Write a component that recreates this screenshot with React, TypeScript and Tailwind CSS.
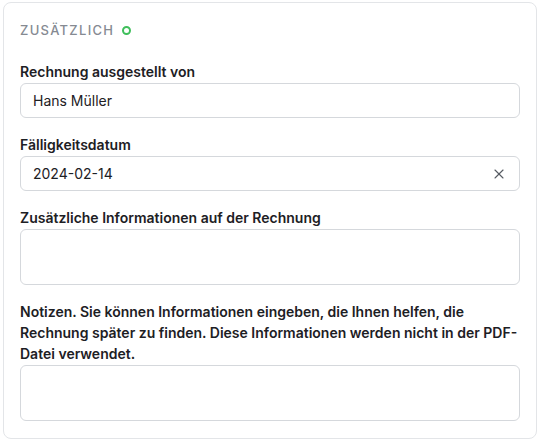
import { X } from "lucide-react";

function Field({ label, children }: { label: string; children: React.ReactNode }) {
  return (
    <div className="flex flex-col gap-[1px]">
      <label className="text-[14px] leading-[21px] font-semibold text-[#1d2024]">{label}</label>
      {children}
    </div>
  );
}

export default function App() {
  return (
    <div
      className="bg-white px-[3px] py-[2px]"
      style={{ fontFamily: "Inter, 'Noto Sans', sans-serif" }}>
      <div className="rounded-lg border border-[#e3e5e8] bg-white px-4 pt-[18px] pb-[17px]">
        {/* Überschrift */}
        <div className="flex items-center gap-[8px]">
          <span className="text-[13px] leading-[18px] font-medium tracking-[0.1em] text-[#858a92]">
            ZUSÄTZLICH
          </span>
          <span className="h-[9px] w-[9px] rounded-full border-2 border-[#3fbf5b]" />
        </div>

        <div className="mt-[22px] flex flex-col gap-4">
          <Field label="Rechnung ausgestellt von">
            <div className="flex h-[35px] items-center rounded-md border border-[#d5d8dc] px-3 text-[14px] text-[#1d2024]">
              Hans Müller
            </div>
          </Field>

          <Field label="Fälligkeitsdatum">
            <div className="flex h-[35px] items-center justify-between rounded-md border border-[#d5d8dc] px-3 text-[14px] text-[#1d2024]">
              <span>2024-02-14</span>
              <X className="h-4 w-4 text-[#555a61]" strokeWidth={1.6} />
            </div>
          </Field>

          <Field label="Zusätzliche Informationen auf der Rechnung">
            <div className="h-[56px] rounded-md border border-[#d5d8dc]" />
          </Field>

          <Field label="Notizen. Sie können Informationen eingeben, die Ihnen helfen, die Rechnung später zu finden. Diese Informationen werden nicht in der PDF-Datei verwendet.">
            <div className="h-[56px] rounded-md border border-[#d5d8dc]" />
          </Field>
        </div>
      </div>
    </div>
  );
}
